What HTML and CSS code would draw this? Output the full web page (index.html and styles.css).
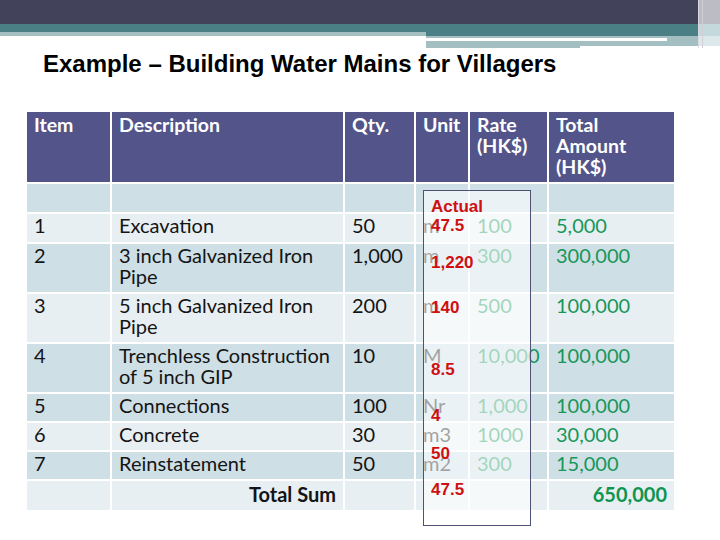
FILE: index.html
```html
<!DOCTYPE html>
<html>
<head>
<meta charset="utf-8">
<link rel="stylesheet" href="styles.css">
</head>
<body>
<div class="deco">
  <div class="deco-main">
    <div class="dark"></div>
    <div class="band">
      <div class="band-left"></div>
      <div class="band-right">
        <div class="br-teal"></div>
        <div class="br-g1"></div>
        <div class="br-line"><div class="br-white"></div></div>
        <div class="br-g2"></div>
        <div class="br-g3"></div>
      </div>
    </div>
  </div>
  <div class="deco-cap"></div>
</div>

<h1 class="title">Example – Building Water Mains for Villagers</h1>

<div class="wrap">
  <div class="tbl">
    <div class="row head">
      <div class="c">Item</div>
      <div class="c">Description</div>
      <div class="c">Qty.</div>
      <div class="c">Unit</div>
      <div class="c">Rate<br>(HK$)</div>
      <div class="c">Total<br>Amount<br>(HK$)</div>
    </div>
    <div class="row dk tall">
      <div class="c"></div><div class="c"></div><div class="c"></div><div class="c"></div><div class="c"></div><div class="c"></div>
    </div>
    <div class="row lt tall">
      <div class="c">1</div><div class="c">Excavation</div><div class="c">50</div><div class="c">m</div><div class="c g">100</div><div class="c g">5,000</div>
    </div>
    <div class="row dk">
      <div class="c">2</div><div class="c">3 inch Galvanized Iron<br>Pipe</div><div class="c">1,000</div><div class="c">m</div><div class="c g">300</div><div class="c g">300,000</div>
    </div>
    <div class="row lt">
      <div class="c">3</div><div class="c">5 inch Galvanized Iron<br>Pipe</div><div class="c">200</div><div class="c">m</div><div class="c g">500</div><div class="c g">100,000</div>
    </div>
    <div class="row dk">
      <div class="c">4</div><div class="c">Trenchless Construction<br>of 5 inch GIP</div><div class="c">10</div><div class="c">M</div><div class="c g">10,000</div><div class="c g">100,000</div>
    </div>
    <div class="row dk">
      <div class="c">5</div><div class="c">Connections</div><div class="c">100</div><div class="c">Nr</div><div class="c g">1,000</div><div class="c g">100,000</div>
    </div>
    <div class="row lt">
      <div class="c">6</div><div class="c">Concrete</div><div class="c">30</div><div class="c">m3</div><div class="c g">1000</div><div class="c g">30,000</div>
    </div>
    <div class="row dk">
      <div class="c">7</div><div class="c">Reinstatement</div><div class="c">50</div><div class="c">m2</div><div class="c g">300</div><div class="c g">15,000</div>
    </div>
    <div class="row lt">
      <div class="c"></div><div class="c sum">Total Sum</div><div class="c"></div><div class="c"></div><div class="c"></div><div class="c g sum">650,000</div>
    </div>
  </div>

  <div class="actual">
    <span class="a0">Actual</span>
    <span class="a1">47.5</span>
    <span class="a2">1,220</span>
    <span class="a3">140</span>
    <span class="a4">8.5</span>
    <span class="a5">4</span>
    <span class="a6">50</span>
    <span class="a7">47.5</span>
  </div>
</div>
</body>
</html>
```
FILE: styles.css
```css
html, body {
  margin: 0;
  padding: 0;
  background: #ffffff;
}
body {
  width: 720px;
  height: 540px;
  overflow: hidden;
  font-family: Lato, "Noto Sans", sans-serif;
}

/* decorative top band */
.deco {
  display: flex;
  height: 48px;
}
.deco-main {
  width: 698px;
  display: flex;
  flex-direction: column;
}
.dark {
  height: 24px;
  background: #42435a;
}
.band {
  display: flex;
  height: 24px;
}
.band-left {
  width: 426px;
  background: linear-gradient(#4a8085 0 8px, #a3bfc2 8px 12px, #ffffff 12px);
}
.band-right {
  flex: 1;
}
.br-teal { height: 12px; background: #4a8085; }
.br-g1 { height: 2px; background: #a3bfc2; }
.br-line { height: 3px; background: #a3bfc2; }
.br-white { width: 241px; height: 3px; background: #ffffff; }
.br-g2 { height: 5px; background: #a3bfc2; }
.br-g3 { width: 154px; height: 2px; background: #a3bfc2; }
.deco-cap {
  flex: 1;
  background:
    linear-gradient(to right, #d8d8de 0 1px, transparent 1px 4px, #d0d0d8 4px 5px, transparent 5px),
    linear-gradient(#bcbcc4 0 24px, #c4d9dc 24px 36px, #dde8ea 36px 46px, #ffffff 46px);
}

.title {
  margin: 2px 0 0 43px;
  font-family: "Liberation Sans", Arial, sans-serif;
  font-weight: bold;
  font-size: 24px;
  line-height: 28px;
  color: #000000;
}

/* table */
.wrap {
  position: relative;
  margin: 34px 0 0 27px;
  width: 647px;
}
.tbl {
  display: flex;
  flex-direction: column;
  gap: 2px;
}
.row {
  display: grid;
  grid-template-columns: 83px 231px 69px 52px 77px 125px;
  column-gap: 2px;
  min-height: 27px;
}
.row.tall { min-height: 28px; }
.row.head {
  height: 69px;
  margin-bottom: 1px;
}
.c {
  padding: 1px 6px 5px 7px;
  font-size: 20px;
  line-height: 21px;
  color: #141414;
}
.head .c {
  background: #53548a;
  color: #ffffff;
  font-weight: bold;
  font-size: 19.5px;
  padding-top: 2px;
}
.dk .c { background: #cedfe6; }
.lt .c { background: #e8eff3; }
.c.g { color: #17975a; }
.c.sum {
  font-weight: bold;
  text-align: right;
  padding-top: 3px;
  padding-right: 7px;
}
.c.g.sum { color: #109550; }

/* overlay box */
.actual {
  position: absolute;
  left: 396px;
  top: 78px;
  box-sizing: border-box;
  width: 108px;
  height: 336px;
  border: 1px solid #4f5076;
  background: rgba(255, 255, 255, 0.6);
  display: flex;
  flex-direction: column;
  align-items: flex-start;
  padding-left: 7px;
  font-family: "Liberation Sans", Arial, sans-serif;
  font-weight: bold;
  font-size: 17px;
  line-height: 13px;
  color: #cf1010;
}
.actual span { display: block; }
.a0 { margin-top: 9px; }
.a1 { margin-top: 6px; }
.a2 { margin-top: 24px; }
.a3 { margin-top: 32px; }
.a4 { margin-top: 49px; }
.a5 { margin-top: 33px; }
.a6 { margin-top: 25px; }
.a7 { margin-top: 23px; }
```
